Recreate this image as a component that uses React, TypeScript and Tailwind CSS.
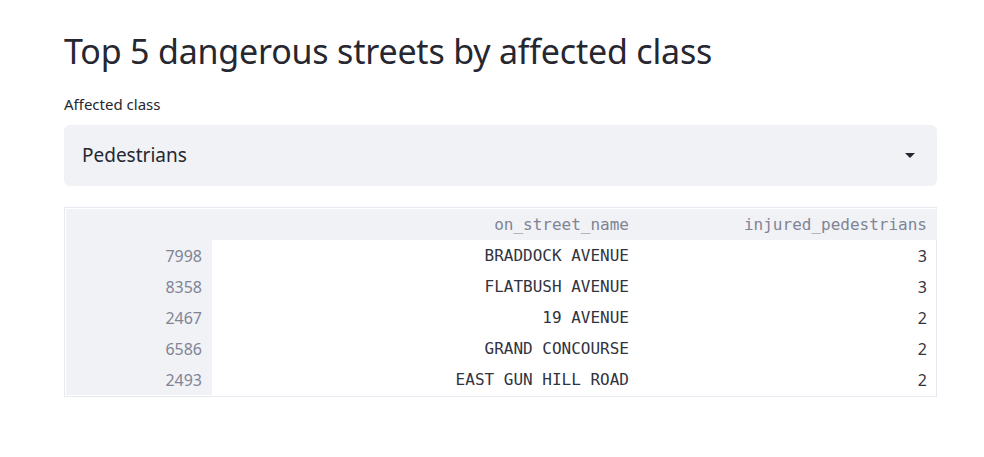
import React from "react";

const rows = [
  { idx: "7998", name: "BRADDOCK AVENUE", val: "3" },
  { idx: "8358", name: "FLATBUSH AVENUE", val: "3" },
  { idx: "2467", name: "19 AVENUE", val: "2" },
  { idx: "6586", name: "GRAND CONCOURSE", val: "2" },
  { idx: "2493", name: "EAST GUN HILL ROAD", val: "2" },
];

const mono = { fontFamily: '"DejaVu Sans Mono", monospace' };

export default function App() {
  return (
    <div className="w-[984px] h-[457px] bg-white text-[#262730]" style={{ fontFamily: '"Noto Sans", "Open Sans", sans-serif' }}>
      <div className="px-[64px] pt-[28px]">
        <h1 className="text-[34px] leading-[46px] font-normal tracking-[-0.2px]">Top 5 dangerous streets by affected class</h1>
        <div className="mt-[20px] text-[15px] leading-[20px]">Affected class</div>
        <div className="mt-[11px] h-[61px] w-[873px] rounded-[6px] bg-[#f0f2f6] flex items-center justify-between pl-[18px] pr-[22px]">
          <span className="text-[19px]">Pedestrians</span>
          <svg width="10" height="6" viewBox="0 0 10 6"><path d="M0 0 L10 0 L5 5 Z" fill="#262730" /></svg>
        </div>
        <div className="mt-[21px] w-[873px] border border-[#e6e9ef] p-[1px]">
          <div className="grid grid-cols-[146px_427px_298px]">
            <div className="h-[31px] bg-[#f0f2f6]" />
            <div className="h-[31px] bg-[#f0f2f6] flex items-center justify-end pr-[10px] text-[16px] text-[#808495]" style={mono}>on_street_name</div>
            <div className="h-[31px] bg-[#f0f2f6] flex items-center justify-end pr-[10px] text-[16px] text-[#808495]" style={mono}>injured_pedestrians</div>
            {rows.map((r) => (
              <React.Fragment key={r.idx}>
                <div className="h-[31px] bg-[#f0f2f6] flex items-center justify-end pr-[10px] text-[16px] text-[#808495]">{r.idx}</div>
                <div className="h-[31px] flex items-center justify-end pr-[10px] text-[16px] text-[#31333f]" style={mono}>{r.name}</div>
                <div className="h-[31px] flex items-center justify-end pr-[10px] text-[16px] text-[#31333f]">{r.val}</div>
              </React.Fragment>
            ))}
          </div>
        </div>
      </div>
    </div>
  );
}
